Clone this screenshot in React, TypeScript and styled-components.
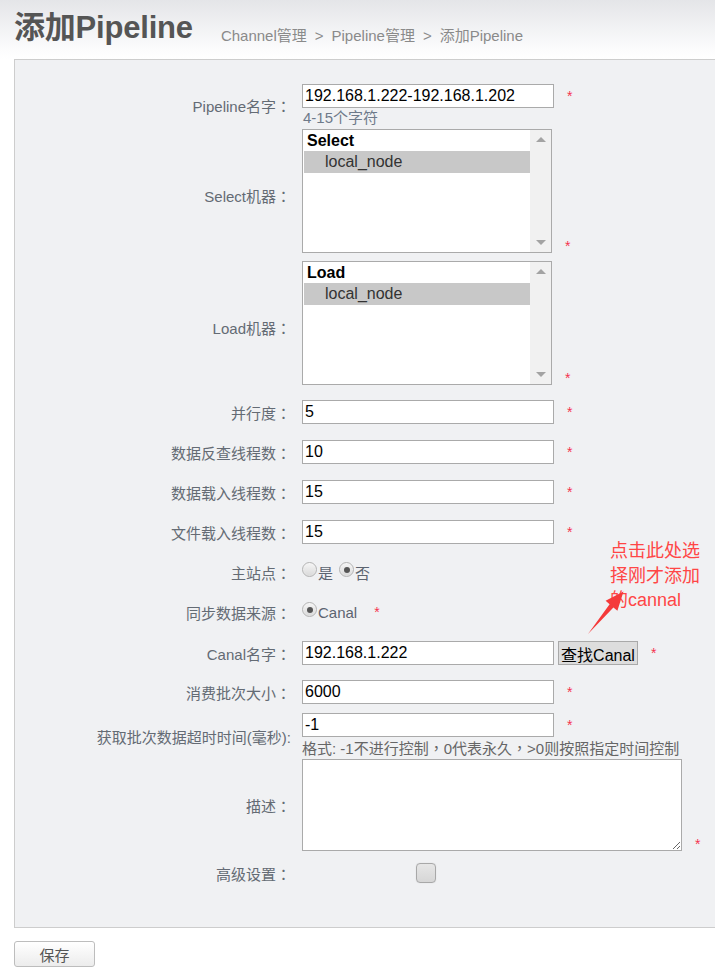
import React from "react";
import styled, { createGlobalStyle } from "styled-components";

const GlobalStyle = createGlobalStyle`
  html, body {
    margin: 0;
    padding: 0;
    background: #fff;
    font-family: "Liberation Sans", "Noto Sans CJK SC", sans-serif;
  }
`;

function Star({ $bottom }: { $bottom?: boolean }) {
  return <Asterisk $bottom={$bottom}>*</Asterisk>;
}

function FieldLabel({ text, shift }: { text: string; shift?: number }) {
  return (
    <Label $shift={shift}>
      {text}
      <Punct>：</Punct>
    </Label>
  );
}

function ListBox({ group, items }: { group: string; items: string[] }) {
  return (
    <List>
      <Options>
        <GroupLabel>{group}</GroupLabel>
        {items.map((it) => (
          <Option key={it} $selected>
            {it}
          </Option>
        ))}
      </Options>
      <ScrollTrack>
        <ArrowUp />
        <ArrowDown />
      </ScrollTrack>
    </List>
  );
}

function App() {
  return (
    <Page>
      <GlobalStyle />
      <Header>
        <Title>添加Pipeline</Title>
        <Crumbs>
          Channel管理<Sep>&gt;</Sep>Pipeline管理<Sep>&gt;</Sep>添加Pipeline
        </Crumbs>
      </Header>

      <Panel>
        <Row $gap={24}>
          <FieldLabel text="Pipeline名字" />
          <Field>
            <Line>
              <TextInput defaultValue="192.168.1.222-192.168.1.202" />
              <Star />
            </Line>
            <Hint>4-15个字符</Hint>
          </Field>
        </Row>

        <Row $gap={2}>
          <FieldLabel text="Select机器" shift={4} />
          <Field>
            <Line $bottom>
              <ListBox group="Select" items={["local_node"]} />
              <Star $bottom />
            </Line>
          </Field>
        </Row>

        <Row $gap={8}>
          <FieldLabel text="Load机器" shift={4} />
          <Field>
            <Line $bottom>
              <ListBox group="Load" items={["local_node"]} />
              <Star $bottom />
            </Line>
          </Field>
        </Row>

        <Row $gap={15}>
          <FieldLabel text="并行度" />
          <Field>
            <Line>
              <TextInput defaultValue="5" />
              <Star />
            </Line>
          </Field>
        </Row>

        <Row $gap={16}>
          <FieldLabel text="数据反查线程数" />
          <Field>
            <Line>
              <TextInput defaultValue="10" />
              <Star />
            </Line>
          </Field>
        </Row>

        <Row $gap={16}>
          <FieldLabel text="数据载入线程数" />
          <Field>
            <Line>
              <TextInput defaultValue="15" />
              <Star />
            </Line>
          </Field>
        </Row>

        <Row $gap={16}>
          <FieldLabel text="文件载入线程数" />
          <Field>
            <Line>
              <TextInput defaultValue="15" />
              <Star />
            </Line>
          </Field>
        </Row>

        <Row $gap={16}>
          <FieldLabel text="主站点" />
          <Field>
            <Line>
              <Radio />
              <RadioText>是</RadioText>
              <Radio $checked $spaced />
              <RadioText>否</RadioText>
            </Line>
          </Field>
        </Row>

        <Row $gap={16}>
          <FieldLabel text="同步数据来源" />
          <Field>
            <Line>
              <Radio $checked />
              <RadioText>Canal</RadioText>
              <Asterisk $wide>*</Asterisk>
            </Line>
          </Field>
        </Row>

        <Row $gap={17}>
          <FieldLabel text="Canal名字" />
          <Field>
            <Line>
              <TextInput defaultValue="192.168.1.222" />
              <FindButton>查找Canal</FindButton>
              <Star />
            </Line>
          </Field>
        </Row>

        <Row $gap={15}>
          <FieldLabel text="消费批次大小" />
          <Field>
            <Line>
              <TextInput defaultValue="6000" />
              <Star />
            </Line>
          </Field>
        </Row>

        <Row $gap={9}>
          <Label>获取批次数据超时时间(毫秒):</Label>
          <Field>
            <Line>
              <TextInput defaultValue="-1" />
              <Star />
            </Line>
            <Note>
              格式: -1不进行控制<Punct>，</Punct>0代表永久<Punct>，</Punct>&gt;0则按照指定时间控制
            </Note>
          </Field>
        </Row>

        <Row $gap={0}>
          <FieldLabel text="描述" />
          <Field>
            <Line $bottom>
              <TextArea />
              <Star $bottom />
            </Line>
          </Field>
        </Row>

        <Row $gap={10}>
          <FieldLabel text="高级设置" />
          <Field>
            <Line>
              <CheckBox />
            </Line>
          </Field>
        </Row>
      </Panel>

      <SaveButton>保存</SaveButton>

      <Callout>点击此处选择刚才添加的cannal</Callout>
      <ArrowMark viewBox="0 0 45 55" width="45" height="55">
        <polygon
          points="3,49 24.6,19.2 20.6,15.8 38.5,6.5 32.4,25.8 28.4,22.4"
          fill="#f53a3a"
        />
      </ArrowMark>
    </Page>
  );
}

const Page = styled.div`
  position: relative;
  width: 715px;
  min-height: 972px;
  overflow: hidden;
`;

const Header = styled.div`
  display: flex;
  align-items: flex-start;
  height: 59px;
  box-sizing: border-box;
  padding: 8px 0 0 14px;
  background: linear-gradient(#e4e5e8, #fbfbfc 80%, #ffffff);
`;

const Title = styled.h1`
  margin: 0;
  font-size: 31px;
  line-height: 40px;
  font-weight: bold;
  color: #555;
  letter-spacing: -0.2px;
`;

const Crumbs = styled.div`
  margin: 18px 0 0 28px;
  font-size: 15px;
  line-height: 20px;
  color: #8a8a8a;
`;

const Sep = styled.span`
  padding: 0 8px;
`;

const Panel = styled.div`
  margin-left: 14px;
  border: 1px solid #cdcdcd;
  border-right: none;
  background: #f0f1f3;
  padding: 0 0 42px 0;
`;

const Row = styled.div<{ $gap: number }>`
  display: flex;
  align-items: center;
  margin-top: ${(p) => p.$gap}px;
`;

const Label = styled.div<{ $shift?: number }>`
  flex: 0 0 276px;
  text-align: right;
  font-size: 15px;
  color: #646b74;
  white-space: nowrap;
  padding-top: ${(p) => (p.$shift ? p.$shift * 2 : 0)}px;
`;

const Punct = styled.span`
  font-family: "Noto Sans CJK TC", "Noto Sans CJK SC", sans-serif;
`;

const Field = styled.div`
  margin-left: 11px;
  display: flex;
  flex-direction: column;
`;

const Line = styled.div<{ $bottom?: boolean }>`
  display: flex;
  align-items: ${(p) => (p.$bottom ? "flex-end" : "center")};
  height: ${(p) => (p.$bottom ? "auto" : "24px")};
`;

const TextInput = styled.input`
  box-sizing: border-box;
  width: 252px;
  height: 24px;
  margin: 0;
  padding: 0 2px;
  border: 1px solid #aaa;
  background: #fff;
  font-family: "Liberation Sans", "Noto Sans CJK SC", sans-serif;
  font-size: 16px;
  color: #000;
  outline: none;
`;

const Asterisk = styled.span<{ $bottom?: boolean; $wide?: boolean }>`
  margin-left: ${(p) => (p.$wide ? 17 : 13)}px;
  font-size: 14px;
  line-height: ${(p) => (p.$bottom ? "14px" : "24px")};
  color: #f5334f;
`;

const Hint = styled.div`
  font-size: 15px;
  line-height: 19px;
  color: #6e7a8a;
  padding-left: 1px;
`;

const Note = styled.div`
  font-size: 15px;
  line-height: 21px;
  color: #666;
  white-space: nowrap;
`;

const List = styled.div`
  box-sizing: border-box;
  width: 250px;
  height: 124px;
  border: 1px solid #aaa;
  background: #fff;
  display: flex;
`;

const Options = styled.div`
  flex: 1;
  padding: 1px 0 0 1px;
  font-size: 16px;
`;

const GroupLabel = styled.div`
  font-weight: bold;
  color: #000;
  line-height: 20px;
  padding-left: 3px;
`;

const Option = styled.div<{ $selected?: boolean }>`
  line-height: 22px;
  padding-left: 21px;
  color: #333;
  background: ${(p) => (p.$selected ? "#c8c8c8" : "transparent")};
`;

const ScrollTrack = styled.div`
  width: 21px;
  background: #f1f1f1;
  display: flex;
  flex-direction: column;
  justify-content: space-between;
  align-items: center;
  padding: 7px 0 7px;
`;

const ArrowUp = styled.div`
  width: 0;
  height: 0;
  border-left: 5px solid transparent;
  border-right: 5px solid transparent;
  border-bottom: 5px solid #a3a3a3;
`;

const ArrowDown = styled.div`
  width: 0;
  height: 0;
  border-left: 5px solid transparent;
  border-right: 5px solid transparent;
  border-top: 5px solid #a3a3a3;
`;

const Radio = styled.span<{ $checked?: boolean; $spaced?: boolean }>`
  position: relative;
  box-sizing: border-box;
  width: 15px;
  height: 15px;
  margin-left: ${(p) => (p.$spaced ? 6 : 0)}px;
  margin-bottom: 5px;
  border-radius: 50%;
  border: 1px solid #b3b3b3;
  background: linear-gradient(#f6f6f6, #d9d9d9);
  box-shadow: inset 0 0 1px #fff;

  &::after {
    content: "";
    display: ${(p) => (p.$checked ? "block" : "none")};
    position: absolute;
    left: 3.5px;
    top: 3.5px;
    width: 6px;
    height: 6px;
    border-radius: 50%;
    background: #555;
  }
`;

const RadioText = styled.span`
  margin-left: 1px;
  font-size: 15px;
  color: #5c6470;
`;

const FindButton = styled.button`
  box-sizing: border-box;
  margin: 0 0 0 4px;
  width: 80px;
  height: 24px;
  padding: 0;
  border: 1px solid #a9a9a9;
  background: #dddddd;
  font-family: "Liberation Sans", "Noto Sans CJK SC", sans-serif;
  font-size: 16px;
  color: #000;
  white-space: nowrap;
`;

const TextArea = styled.textarea`
  box-sizing: border-box;
  display: block;
  width: 380px;
  height: 92px;
  margin: 0;
  border: 1px solid #aaa;
  background: #fff;
  outline: none;
`;

const CheckBox = styled.span`
  box-sizing: border-box;
  width: 20px;
  height: 20px;
  margin-left: 114px;
  border-radius: 4px;
  border: 1px solid #a8a8a8;
  background: linear-gradient(#e6e6e6, #d6d6d6);
  box-shadow: 0 0 1px #ccc;
`;

const SaveButton = styled.button`
  display: block;
  box-sizing: border-box;
  margin: 13px 0 0 14px;
  width: 81px;
  height: 26px;
  padding: 0;
  border: 1px solid #bdbdbd;
  border-radius: 3px;
  background: linear-gradient(#ffffff, #ececec);
  font-family: "Liberation Sans", "Noto Sans CJK SC", sans-serif;
  font-size: 15px;
  color: #555;
`;

const Callout = styled.div`
  position: absolute;
  left: 610px;
  top: 539px;
  width: 96px;
  font-size: 18px;
  line-height: 24.5px;
  color: #ff4646;
`;

const ArrowMark = styled.svg`
  position: absolute;
  left: 585px;
  top: 585px;
`;

export default App;
